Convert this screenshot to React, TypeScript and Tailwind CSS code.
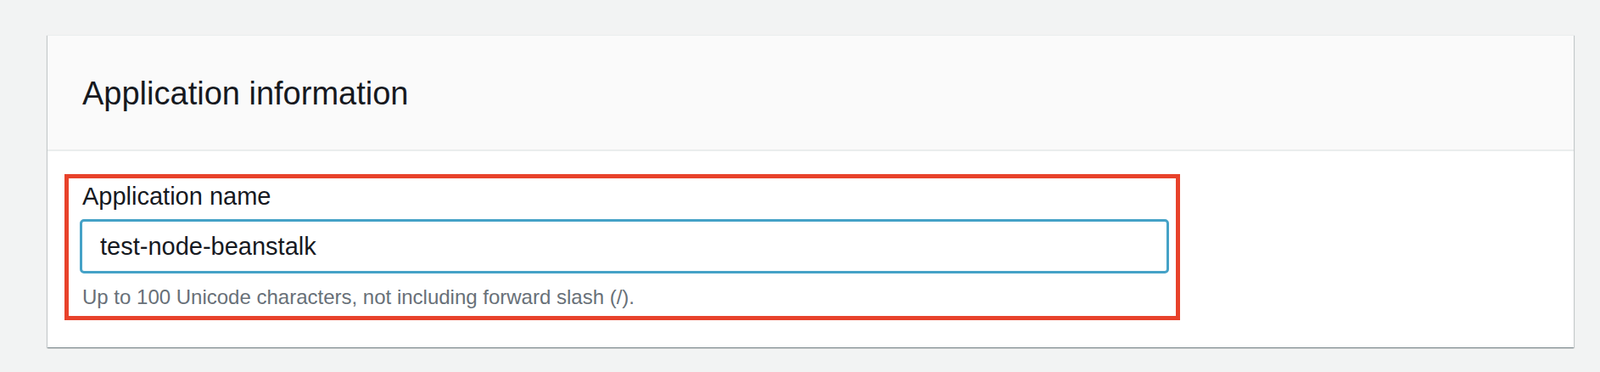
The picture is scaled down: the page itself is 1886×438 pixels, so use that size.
import React from 'react';

const FONT = { fontFamily: '"Liberation Sans", Arial, sans-serif' };

export default function App() {
  return (
    <div className="min-h-screen w-full bg-[#f2f3f3] pt-[41px] pl-[56px] pr-[31px]" style={FONT}>
      <div className="bg-white border-t border-[#eaeded] shadow-[0_1px_1px_0_rgba(0,28,36,0.3),1px_1px_1px_0_rgba(0,28,36,0.15),-1px_1px_1px_0_rgba(0,28,36,0.15)]">
        {/* header */}
        <div className="bg-[#fafafa] border-b-2 border-[#eaeded] pl-[41px] pt-[49px] pb-[47px]">
          <h2 className="text-[38px] leading-none font-normal text-[#16191f]">Application information</h2>
        </div>

        {/* body */}
        <div className="pl-[20px] pt-[27px] pb-[32px]">
          {/* highlighted form field */}
          <div className="w-[1315px] border-[5px] border-[#e8422b] pt-[4px] pb-[8px] pl-[13px] pr-[8px]">
            <label className="block pl-[3px] text-[29px] leading-[34px] text-[#16191f]">Application name</label>
            <input
              readOnly
              defaultValue="test-node-beanstalk"
              className="mt-[10px] block w-full h-[64px] rounded-[5px] border-[3px] border-[#45a2c7] bg-white pl-[21px] text-[29px] text-[#16191f] outline-none"
              style={FONT}
            />
            <p className="mt-[14px] pl-[3px] text-[24px] leading-[28px] text-[#687078]">
              Up to 100 Unicode characters, not including forward slash (/).
            </p>
          </div>
        </div>
      </div>
    </div>
  );
}
